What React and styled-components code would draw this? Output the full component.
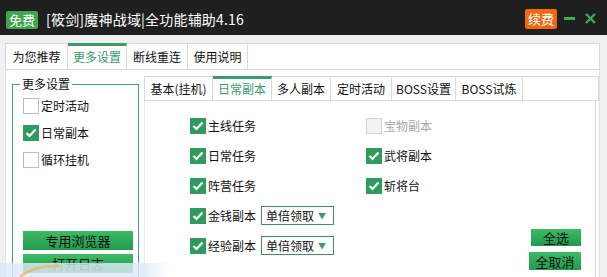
import { createGlobalStyle } from 'styled-components'
import styled from 'styled-components'

const GlobalStyle = createGlobalStyle`
  html, body {
    margin: 0;
    padding: 0;
    background: #e8eef4;
  }
  body {
    font-family: 'Noto Sans CJK SC', 'Noto Sans', sans-serif;
    font-size: 12px;
    color: #111;
  }
`

const Window = styled.div`
  position: relative;
  width: 607px;
  height: 277px;
  background: #f0f0f0;
  overflow: hidden;
`

const TitleBar = styled.div`
  height: 35px;
  background: #1f1f1f;
  display: flex;
  align-items: center;
  padding: 0 11px 0 6px;
`

const Badge = styled.div`
  background: ${(p) => p.color};
  color: #fff;
  font-size: 13px;
  line-height: 1;
  height: ${(p) => (p.tall ? '20px' : '18px')};
  padding: 0 3px;
  display: flex;
  align-items: center;
  border-radius: 2px;
  margin-top: ${(p) => (p.tall ? '2px' : '4px')};
`

const Title = styled.div`
  color: #fff;
  font-size: 14px;
  line-height: 1;
  margin-left: 8px;
  margin-top: 2px;
  letter-spacing: 0.2px;
`

const Spacer = styled.div`
  flex: 1;
`

const WinButton = styled.div`
  width: 11px;
  height: 11px;
  margin-left: ${(p) => p.gap}px;
  margin-top: 2px;
  display: flex;
  align-items: center;
  justify-content: center;
`

const Body = styled.div`
  padding: 8px 7px 0 5px;
`

const TabBar = styled.div`
  display: flex;
  height: ${(p) => p.h}px;
  background: #fff;
  border: 1px solid #d9d9d9;
  box-sizing: border-box;
`

const Tab = styled.div`
  width: ${(p) => p.w}px;
  box-sizing: border-box;
  display: flex;
  align-items: center;
  justify-content: center;
  border-right: 1px solid #d9d9d9;
  border-top: 3px solid ${(p) => (p.active ? '#3d9a6c' : 'transparent')};
  margin-top: -1px;
  color: ${(p) => (p.active ? '#3d9a6c' : '#111')};
  font-size: 12px;
  line-height: 1;
  padding-bottom: 2px;
`

const Panel = styled.div`
  display: flex;
  gap: 5px;
  background: #fff;
  border-left: 1px solid #e2e2e2;
  border-right: 1px solid #e2e2e2;
  height: 207px;
  box-sizing: border-box;
  padding: 6px 0 0 6px;
`

const GroupBox = styled.fieldset`
  width: 127px;
  min-width: 0;
  flex: none;
  box-sizing: border-box;
  margin: 0;
  margin-top: 1px;
  border: 1px solid #4c9c7c;
  padding: 4px 9px 0 10px;
  display: flex;
  flex-direction: column;
  height: 230px;
`

const Legend = styled.legend`
  font-size: 12px;
  line-height: 14px;
  padding: 0 2px;
  margin-left: -3px;
`

const CheckList = styled.div`
  display: flex;
  flex-direction: column;
  gap: 10px;
  margin-top: 2px;
`

const CheckRow = styled.div`
  display: flex;
  align-items: center;
  gap: 2px;
  height: 17px;
  color: ${(p) => (p.disabled ? '#a8a8a8' : '#111')};
  font-size: 12px;
  line-height: 1;
`

const Box = styled.div`
  width: 16px;
  height: 16px;
  box-sizing: border-box;
  border: 1px solid ${(p) => (p.checked ? '#2f9c5e' : p.disabled ? '#d4d4d4' : '#a9c6b8')};
  background: ${(p) => (p.checked ? '#2f9c5e' : p.disabled ? '#f2f2f2' : '#fff')};
  display: flex;
  align-items: center;
  justify-content: center;
`

const GreenButton = styled.div`
  height: ${(p) => p.h}px;
  width: ${(p) => p.w}px;
  box-sizing: border-box;
  background: linear-gradient(#3dbb63, #209a4c);
  display: flex;
  align-items: center;
  justify-content: center;
  font-size: 13px;
  line-height: 1;
  color: #111;
`

const GroupButtons = styled.div`
  margin-top: 63px;
  display: flex;
  flex-direction: column;
  gap: 4px;
`

const Inner = styled.div`
  flex: 1;
  display: flex;
  flex-direction: column;
`

const InnerBody = styled.div`
  flex: 1;
  border-left: 1px solid #e6e6e6;
  border-right: 1px solid #dcdcdc;
  margin-right: 3px;
  display: flex;
  padding: 16px 0 0 45px;
  position: relative;
`

const Column = styled.div`
  width: ${(p) => p.w}px;
  display: flex;
  flex-direction: column;
  gap: 13px;
`

const Select = styled.div`
  width: 73px;
  height: 19px;
  box-sizing: border-box;
  border: 1px solid #3f8f62;
  margin-left: 3px;
  display: flex;
  align-items: center;
  justify-content: space-between;
  padding: 0 7px 0 4px;
  font-size: 12px;
  color: #111;
  span {
    color: #3d9a6c;
    font-size: 8px;
  }
`

const RightButtons = styled.div`
  position: absolute;
  right: 14px;
  top: 128px;
  display: flex;
  flex-direction: column;
  align-items: flex-end;
  gap: 6px;
`

const Desktop = styled.div`
  position: absolute;
  left: 0;
  bottom: 0;
  width: 170px;
  height: 14px;
  background: linear-gradient(
    to right,
    rgba(222, 234, 247, 0.82) 0%,
    rgba(222, 234, 247, 0.82) 85%,
    rgba(222, 234, 247, 0) 100%
  );
`

const Swoosh = styled.svg`
  position: absolute;
  left: 18px;
  bottom: 0;
`

function Check({ checked, disabled, children }) {
  return (
    <CheckRow disabled={disabled}>
      <Box checked={checked} disabled={disabled}>
        {checked && (
          <svg width="12" height="10" viewBox="0 0 12 10">
            <path d="M1.5 5 L4.5 8 L10.5 1.5" fill="none" stroke="#fff" strokeWidth="2.2" />
          </svg>
        )}
      </Box>
      {children}
    </CheckRow>
  )
}

const mainTabs = [
  ['为您推荐', 62],
  ['更多设置', 59],
  ['断线重连', 61],
  ['使用说明', 60],
]

const subTabs = [
  ['基本(挂机)', 68],
  ['日常副本', 59],
  ['多人副本', 59],
  ['定时活动', 61],
  ['BOSS设置', 64],
  ['BOSS试炼', 67],
]

export default function App() {
  return (
    <>
      <GlobalStyle />
      <Window>
        <TitleBar>
          <Badge color="#3ea64c">免费</Badge>
          <Title>[筱剑]魔神战域|全功能辅助4.16</Title>
          <Spacer />
          <Badge color="#f0690f" tall>
            续费
          </Badge>
          <WinButton gap={7}>
            <svg width="11" height="11" viewBox="0 0 11 11">
              <rect x="0" y="4" width="11" height="3" fill="#3aad4f" />
            </svg>
          </WinButton>
          <WinButton gap={10}>
            <svg width="11" height="11" viewBox="0 0 11 11">
              <path d="M1 1 L10 10 M10 1 L1 10" stroke="#3aad4f" strokeWidth="2.4" />
            </svg>
          </WinButton>
        </TitleBar>
        <Body>
          <TabBar h={27}>
            {mainTabs.map(([t, w], i) => (
              <Tab key={t} w={w} active={i === 1}>
                {t}
              </Tab>
            ))}
          </TabBar>
          <Panel>
            <GroupBox>
              <Legend>更多设置</Legend>
              <CheckList>
                <Check>定时活动</Check>
                <Check checked>日常副本</Check>
                <Check>循环挂机</Check>
              </CheckList>
              <GroupButtons>
                <GreenButton w={110} h={19}>
                  专用浏览器
                </GreenButton>
                <GreenButton w={110} h={19}>
                  打开日志
                </GreenButton>
              </GroupButtons>
            </GroupBox>
            <Inner>
              <TabBar h={25}>
                {subTabs.map(([t, w], i) => (
                  <Tab key={t} w={w} active={i === 1}>
                    {t}
                  </Tab>
                ))}
              </TabBar>
              <InnerBody>
                <Column w={176}>
                  <Check checked>主线任务</Check>
                  <Check checked>日常任务</Check>
                  <Check checked>阵营任务</Check>
                  <Check checked>
                    金钱副本
                    <Select>
                      单倍领取<span>▼</span>
                    </Select>
                  </Check>
                  <Check checked>
                    经验副本
                    <Select>
                      单倍领取<span>▼</span>
                    </Select>
                  </Check>
                </Column>
                <Column w={120}>
                  <Check disabled>宝物副本</Check>
                  <Check checked>武将副本</Check>
                  <Check checked>斩将台</Check>
                </Column>
                <RightButtons>
                  <GreenButton w={50} h={17}>
                    全选
                  </GreenButton>
                  <GreenButton w={52} h={18}>
                    全取消
                  </GreenButton>
                </RightButtons>
              </InnerBody>
            </Inner>
          </Panel>
        </Body>
        <Desktop>
          <Swoosh width="44" height="14" viewBox="0 0 44 14">
            <path d="M2 14 Q16 2 42 3" fill="none" stroke="#f3b46a" strokeWidth="2.5" opacity="0.8" />
          </Swoosh>
        </Desktop>
      </Window>
    </>
  )
}
